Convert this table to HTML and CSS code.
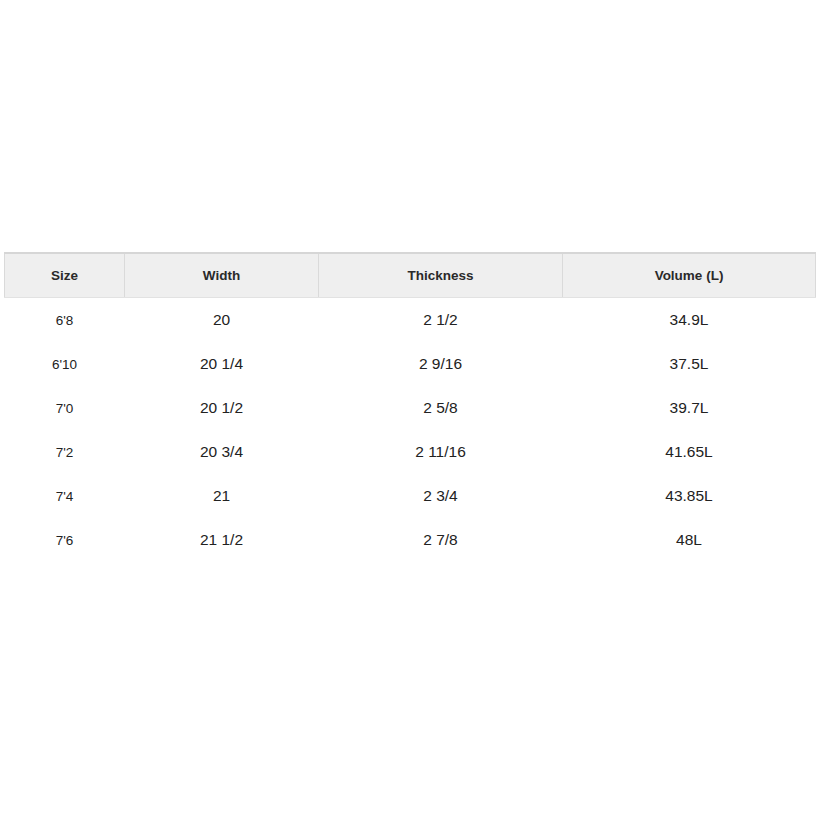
FILE: index.html
```html
<!DOCTYPE html>
<html>
<head>
<meta charset="utf-8">
<link rel="stylesheet" href="styles.css">
</head>
<body>
<div class="page">
<table class="sizes">
<colgroup>
<col class="c1"><col class="c2"><col class="c3"><col class="c4">
</colgroup>
<thead>
<tr><th>Size</th><th>Width</th><th>Thickness</th><th>Volume (L)</th></tr>
</thead>
<tbody>
<tr><td class="sz">6'8</td><td>20</td><td>2 1/2</td><td>34.9L</td></tr>
<tr><td class="sz">6'10</td><td>20 1/4</td><td>2 9/16</td><td>37.5L</td></tr>
<tr><td class="sz">7'0</td><td>20 1/2</td><td>2 5/8</td><td>39.7L</td></tr>
<tr><td class="sz">7'2</td><td>20 3/4</td><td>2 11/16</td><td>41.65L</td></tr>
<tr><td class="sz">7'4</td><td>21</td><td>2 3/4</td><td>43.85L</td></tr>
<tr><td class="sz">7'6</td><td>21 1/2</td><td>2 7/8</td><td>48L</td></tr>
</tbody>
</table>
</div>
</body>
</html>
```
FILE: styles.css
```css
html, body {
  margin: 0;
  padding: 0;
  background: #ffffff;
}
.page {
  width: 820px;
  height: 820px;
  padding: 252px 4px 0 4px;
  box-sizing: border-box;
  font-family: "Liberation Sans", Arial, sans-serif;
  color: #222222;
}
.sizes {
  width: 811px;
  border-collapse: collapse;
  table-layout: fixed;
}
.c1 { width: 120px; }
.c2 { width: 194px; }
.c3 { width: 244px; }
.c4 { width: 253px; }
.sizes th {
  height: 43px;
  background: #efefef;
  border-top: 2px solid #d6d6d6;
  border-bottom: 1px solid #e2e2e2;
  border-left: 1px solid #dadada;
  border-right: 1px solid #dadada;
  font-size: 13.5px;
  font-weight: bold;
  color: #2a2a2a;
  text-align: center;
  vertical-align: middle;
  padding: 0;
}
.sizes td {
  height: 44px;
  padding: 0;
  text-align: center;
  vertical-align: middle;
  font-size: 15.5px;
  color: #222222;
}
.sizes td.sz {
  font-size: 13.5px;
}
```
